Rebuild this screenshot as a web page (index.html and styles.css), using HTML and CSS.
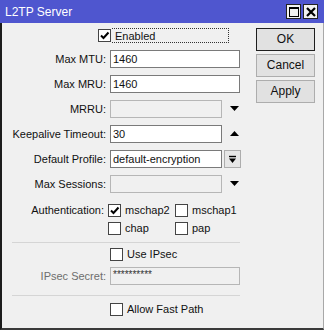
FILE: index.html
```html
<html>
<head>
    <link rel="stylesheet" href="styles.css">
</head>
<body>
    <div class="window">
        <div class="titlebar">
            <span class="title">L2TP Server</span>
            <span class="tbtn"><span class="maxbox"></span></span>
            <span class="tbtn">
                <svg width="10" height="10" viewBox="0 0 10 10"><path d="M1 1 L9 9 M9 1 L1 9" stroke="#000" stroke-width="2.2"/></svg>
            </span>
        </div>

        <div class="content">
            <div class="form">
                <!-- Enabled -->
                <div class="row row-enabled">
                    <div class="lbl"></div>
                    <div class="focus">
                        <span class="cb"><svg width="11" height="11" viewBox="0 0 11 11"><path d="M2 5.5 L4.5 8 L9.5 2.5" fill="none" stroke="#000" stroke-width="2"/></svg></span>
                        <span>Enabled</span>
                    </div>
                </div>

                <div class="rows">
                    <div class="row">
                        <div class="lbl">Max MTU:</div>
                        <div class="input">1460</div>
                    </div>
                    <div class="row">
                        <div class="lbl">Max MRU:</div>
                        <div class="input">1460</div>
                    </div>
                    <div class="row">
                        <div class="lbl">MRRU:</div>
                        <div class="input short off"></div>
                        <svg class="arrow" width="9" height="6" viewBox="0 0 9 6"><path d="M0 0 H9 L4.5 5 Z" fill="#000"/></svg>
                    </div>
                    <div class="row">
                        <div class="lbl">Keepalive Timeout:</div>
                        <div class="input short">30</div>
                        <svg class="arrow" width="9" height="6" viewBox="0 0 9 6"><path d="M0 5 H9 L4.5 0 Z" fill="#000"/></svg>
                    </div>
                    <div class="row">
                        <div class="lbl">Default Profile:</div>
                        <div class="input short">default-encryption</div>
                        <span class="dropbtn">
                            <svg width="9" height="9" viewBox="0 0 9 9"><path d="M1 1.5 H8" stroke="#000" stroke-width="1.4"/><path d="M1 3.5 H8 L4.5 8 Z" fill="#000"/></svg>
                        </span>
                    </div>
                    <div class="row">
                        <div class="lbl">Max Sessions:</div>
                        <div class="input short off"></div>
                        <svg class="arrow" width="9" height="6" viewBox="0 0 9 6"><path d="M0 0 H9 L4.5 5 Z" fill="#000"/></svg>
                    </div>
                </div>

                <!-- Authentication -->
                <div class="auth">
                    <div class="row">
                        <div class="lbl">Authentication:</div>
                        <div class="checks">
                            <label class="chk"><span class="cb"><svg width="11" height="11" viewBox="0 0 11 11"><path d="M2 5.5 L4.5 8 L9.5 2.5" fill="none" stroke="#000" stroke-width="2"/></svg></span>mschap2</label>
                            <label class="chk"><span class="cb"></span>mschap1</label>
                        </div>
                    </div>
                    <div class="row">
                        <div class="lbl"></div>
                        <div class="checks">
                            <label class="chk"><span class="cb"></span>chap</label>
                            <label class="chk"><span class="cb"></span>pap</label>
                        </div>
                    </div>
                </div>

                <div class="sep sep1"></div>

                <div class="row row-ipsec">
                    <div class="lbl"></div>
                    <label class="chk"><span class="cb"></span>Use IPsec</label>
                </div>
                <div class="row row-secret">
                    <div class="lbl dim">IPsec Secret:</div>
                    <div class="input off secret">**********</div>
                </div>

                <div class="sep sep2"></div>

                <div class="row row-fast">
                    <div class="lbl"></div>
                    <label class="chk"><span class="cb"></span>Allow Fast Path</label>
                </div>
            </div>

            <div class="buttons">
                <div class="btn default">OK</div>
                <div class="btn">Cancel</div>
                <div class="btn">Apply</div>
            </div>
        </div>
    </div>
</body>
</html>
```

FILE: styles.css
```css
html {
    font-family: "Liberation Sans", Arial, sans-serif;
    font-size: 11px;
    color: #111;
}
body {
    margin: 0;
    background-color: #fff;
}

.window {
    width: 324px;
    height: 330px;
    display: flex;
    flex-direction: column;
}

.titlebar {
    height: 23px;
    background-color: #4f56cf;
    display: flex;
    align-items: center;
    padding: 0 6px 0 5px;
}
.title {
    color: #fff;
    font-size: 12px;
    flex: 1;
    margin-top: 1px;
}
.tbtn {
    width: 13px;
    height: 13px;
    background-color: #f2f2f2;
    border: 1px solid #222;
    margin-left: 2px;
    display: flex;
    align-items: center;
    justify-content: center;
}
.maxbox {
    width: 8px;
    height: 7px;
    border: 1px solid #000;
    border-top-width: 2px;
}

.content {
    flex: 1;
    background-color: #f0f0f0;
    border-left: 2px solid #1c1c1c;
    border-right: 1px solid #a8a8a8;
    border-bottom: 2px solid #3a3a3a;
    display: flex;
}

.form {
    width: 240px;
    display: flex;
    flex-direction: column;
}

.row {
    display: flex;
    align-items: center;
    height: 18px;
}
.lbl {
    width: 104px;
    padding-right: 4px;
    text-align: right;
    white-space: nowrap;
}
.lbl.dim {
    color: #6d6d6d;
}

.row-enabled {
    margin-top: 5px;
    height: 15px;
}
.focus {
    display: flex;
    align-items: center;
    width: 116px;
    height: 13px;
    border: 1px dotted #333;
    border-left: none;
    margin-left: 2px;
}
.row-enabled .cb {
    margin-left: -14px;
    margin-right: 4px;
}

.rows {
    margin-top: 7px;
    display: flex;
    flex-direction: column;
    gap: 7px;
}

.input {
    width: 126px;
    height: 16px;
    line-height: 16px;
    border: 1px solid #7a7a7a;
    background-color: #fff;
    padding-left: 2px;
    white-space: nowrap;
    overflow: hidden;
}
.input.short {
    width: 108px;
}
.input.off {
    background-color: #f0f0f0;
    border-color: #b6b6b6;
}
.input.secret {
    font-size: 10px;
    color: #333;
    line-height: 14px;
}
.arrow {
    margin-left: 8px;
}
.dropbtn {
    width: 15px;
    height: 16px;
    margin-left: 2px;
    border: 1px solid #adadad;
    background-color: #e6e6e6;
    display: flex;
    align-items: center;
    justify-content: center;
}

.cb {
    width: 11px;
    height: 11px;
    border: 1px solid #444;
    background-color: #fff;
    display: inline-flex;
    align-items: center;
    justify-content: center;
    flex-shrink: 0;
}

.chk {
    display: flex;
    align-items: center;
}
.chk .cb {
    margin-right: 4px;
}
.checks {
    display: flex;
}
.checks .chk {
    width: 67px;
}

.auth {
    margin-top: 8px;
}

.sep {
    margin-left: 10px;
    width: 228px;
    height: 1px;
    background-color: #d5d5d5;
}
.sep1 {
    margin-top: 5px;
}
.sep2 {
    margin-top: 10px;
}
.row-ipsec {
    margin-top: 2px;
}
.row-secret {
    margin-top: 4px;
}
.row-fast {
    margin-top: 4px;
}

.buttons {
    margin-left: 14px;
    margin-top: 5px;
    display: flex;
    flex-direction: column;
    gap: 3px;
}
.btn {
    width: 57px;
    height: 21px;
    line-height: 21px;
    text-align: center;
    background-color: #e1e1e1;
    border: 1px solid #adadad;
    font-size: 12px;
}
.btn.default {
    border-color: #1e1e1e;
}
```
